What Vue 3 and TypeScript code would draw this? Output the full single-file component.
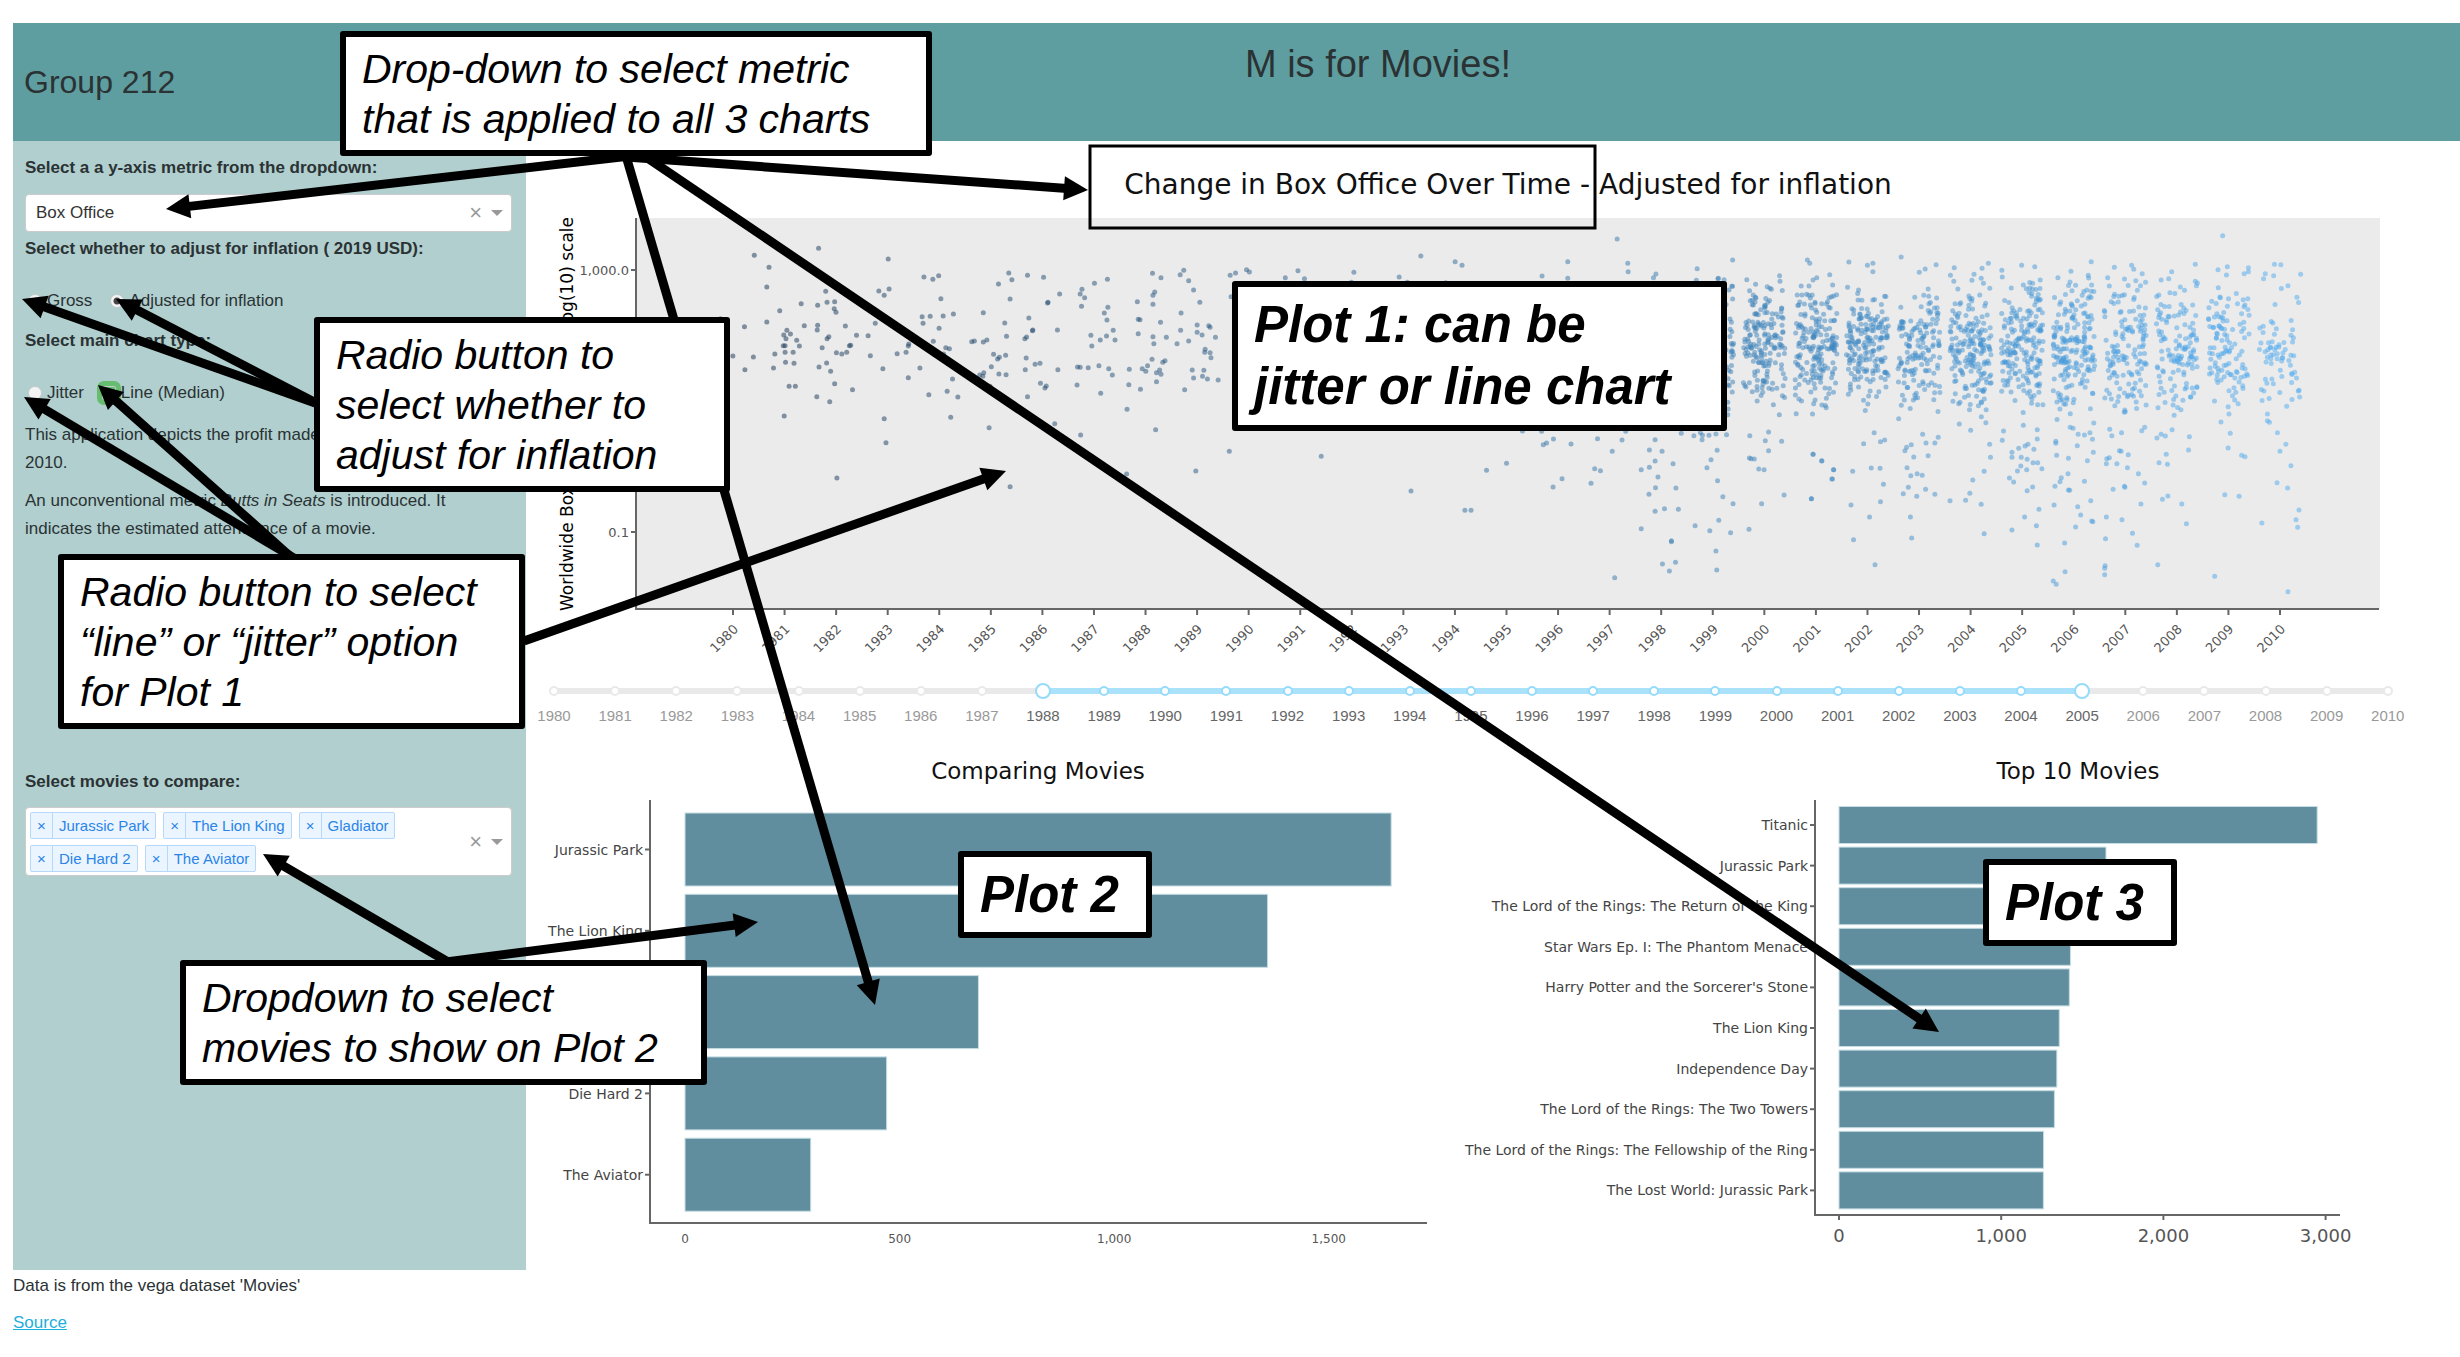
<script setup lang="ts">
import { ref } from 'vue'

interface Point { x: number; y: number; fill: string }
interface Bar { name: string; value: number }
interface Patch { x: number; y: number; kx: number; pts: number[] }
interface Note { id: string; left: number; top: number; width: number; height: number; strong?: boolean; lines: string[] }

const metrics = ['Box Office', 'Butts in Seats', 'Profit Ratio']
const metric = ref('Box Office')
const adjust = ref('adjusted')
const chartType = ref('line')
const movies = ref(['Jurassic Park', 'The Lion King', 'Gladiator', 'Die Hard 2', 'The Aviator'])
const from = ref(1988)
const to = ref(2005)
const years = Array.from({ length: 31 }, (_, i) => 1980 + i)

const yearX = (y: number) => 733 + ((y - 1980) * 1547) / 30
const pct = (y: number) => ((y - 1980) / 30) * 100
const removeMovie = (name: string) => { movies.value = movies.value.filter((m) => m !== name) }

// Colour ramp from dark navy (1980) to bright blue (2010)
function shade(x: number): string {
  const t = Math.min(1, Math.max(0, (x - 733) / 1547))
  const mix = (a: number, b: number) => Math.round(a + (b - a) * t)
  return `rgb(${mix(19, 80)},${mix(48, 172)},${mix(78, 242)})`
}

const patches: Patch[] = [
  { x: 540, y: 120, kx: 2.24, pts: [
    480,406, 513,442, 508,501, 624,385, 780,417, 640,514, 585,551, 622,556, 643,547, 660,545, 537,572, 659,566, 663,577, 508,606, 458,620,
    592,617, 622,616, 621,630, 684,618, 553,631, 546,645, 561,642, 551,656, 575,661, 545,677, 549,677, 581,678, 549,697, 567,697, 526,702,
    478,711, 432,708, 459,749, 523,744, 550,727, 569,730, 632,683, 643,656, 647,650, 693,677, 696,676, 664,698, 676,702, 687,697, 709,646,
    735,647, 740,707, 642,729, 625,741, 651,754, 558,799, 572,799, 620,830, 649,845, 660,791, 700,809, 547,888, 768,746, 751,610, 771,526,
    759,513, 782,507, 800,701, 820,697, 825,678, 826,672, 825,773, 771,896, 775,968, 665,1074, 860,471, 880,478, 893,467, 898,536, 856,590,
    874,589, 858,610, 903,588, 926,582, 894,625, 881,664, 909,683, 917,686, 904,702, 851,744, 924,777, 912,814, 871,824, 936,831, 920,892,
    1006,923, 993,578, 967,665, 973,663, 993,666, 1001,660, 1016,703, 1025,717, 1029,712, 1043,706, 1011,740, 994,758, 985,765, 992,769,
    1028,762, 1044,764, 1008,799, 1050,459, 1057,479, 1027,492, 1092,466, 1128,472, 1053,537, 1041,609, 1045,649, 1095,594, 1103,632,
    1104,630, 1138,547, 1137,549, 1164,522, 1086,656, 1090,651, 1089,714, 1087,749, 1109,733, 1120,730, 1159,630, 1160,749, 1121,790,
    1131,804, 1134,798, 1092,830, 1153,911, 1211,945, 1053,1100, 1203,795, 1204,741, 1210,742, 1228,743, 1252,737, 1256,820, 1242,490,
    1271,478, 1214,508, 1210,522, 1220,533, 1213,559, 1272,562, 1264,579, 1270,600, 1284,631, 1234,646, 1236,678, 1255,660, 1269,648,
    1288,660, 1274,746, 1282,765, 1320,748, 1319,794, 1345,808, 1315,868, 1314,1062, 1379,929, 1338,545, 1340,598, 1344,599, 1340,641,
    1372,460, 1391,473, 1377,516, 1373,526, 1373,553, 1390,607, 1373,650, 1375,671, 1403,652, 1371,718, 1395,727, 1400,722, 1361,737,
    1349,746, 1357,754, 1388,750, 1381,758, 1391,763, 1381,785, 1442,451, 1434,464, 1453,482, 1464,510, 1478,547, 1436,579, 1435,631,
    1427,671, 1453,663, 1472,615, 1472,637, 1483,645, 1498,617, 1501,622, 1513,652, 1490,688, 1489,697, 1501,698, 1503,713, 1461,750,
    1464,774, 1487,751, 1484,769, 1495,777, 1519,780, 1444,809, 1469,1053, 1544,994, 1546,466, 1558,459, 1548,530, 404,596
  ] },
  { x: 1200, y: 120, kx: 2.45, pts: [
    114,449, 121,456, 209,473, 240,452, 256,476, 377,457, 488,471, 541,408, 625,425, 642,436, 371,487, 508,487, 602,488, 838,468, 901,425,
    901,475, 1022,357, 1048,430, 1049,455, 1117,462, 1111,473, 1218,446, 1305,420, 1270,475, 1284,479, 1216,481, 1303,499, 1305,537,
    1302,607, 1303,635, 1301,697, 1303,712, 1296,751, 1294,776, 1305,786, 1304,816, 1293,847, 1294,867, 1293,884, 1296,510, 1299,628,
    297,1009, 517,1113, 649,1171, 664,1171, 702,1051, 751,1030, 790,933, 837,934, 866,957, 849,969, 841,974, 909,972, 974,956, 865,1101,
    887,1076, 967,1046, 981,1052, 958,1090, 1010,994, 1034,960, 1043,934, 1115,959, 1101,990, 1132,994, 1115,1023, 1159,1031, 1101,1042,
    1081,1049, 1122,1071, 1116,1103, 1166,1104, 1100,1123, 1138,1166, 1172,1168, 1115,1174, 1081,1226, 1155,1262, 1155,1265, 1165,1327,
    1133,1332, 1150,1353, 1016,1373, 1179,940, 1210,947, 1226,938, 1231,946, 1247,946, 1264,942, 1290,944, 1230,959, 1267,991, 1252,1019,
    1242,1043, 1268,1082, 1281,1130, 1306,1151, 1271,1201, 1213,1217, 1249,1232, 1300,1238, 1264,1293, 1266,1350, 1345,1228, 1376,1151,
    1431,1125, 1498,1136, 1369,1047, 1382,1049, 1346,1014, 1350,1016, 1358,1017, 1393,992, 1385,962, 1425,964, 1347,947, 1393,936,
    1502,1003, 1523,1022, 1552,1049, 1548,1077, 1488,420, 1494,430, 1420,467, 1421,484, 1511,473, 1502,480
  ] },
  { x: 1800, y: 120, kx: 2.373, pts: [
    116,426, 160,436, 173,430, 173,455, 240,411, 283,457, 297,447, 323,434, 366,443, 357,466, 365,484, 447,430, 432,445, 413,463, 408,481,
    430,475, 479,451, 480,471, 526,436, 557,440, 570,480, 552,490, 612,473, 643,454, 691,425, 684,466, 685,474, 692,495, 654,496, 746,442,
    787,436, 792,448, 812,461, 730,473, 770,477, 734,498, 820,487, 882,455, 857,480, 875,476, 938,433, 938,484, 943,489, 1003,347,
    992,449, 1014,440, 1012,465, 1064,443, 1054,461, 1064,455, 1126,433, 1141,434, 1104,461, 1100,476, 1124,467, 1188,463, 1158,497,
    151,971, 176,938, 191,965, 201,960, 125,1054, 169,1044, 190,1045, 198,1093, 191,1145, 121,1155, 165,1191, 127,1259, 178,1334,
    291,943, 328,952, 299,969, 320,969, 264,974, 253,982, 249,992, 270,1011, 304,1007, 254,1043, 263,1067, 278,1061, 290,1066, 257,1102,
    298,1108, 245,1121, 277,1129, 320,1123, 262,1191, 265,1254, 356,1142, 393,1141, 403,1120, 410,1080, 437,1054, 430,1153, 437,1241,
    452,1012, 450,973, 405,931, 441,908, 378,912, 483,933, 480,961, 563,929, 563,957, 530,916, 541,973, 534,978, 519,985, 555,988,
    503,997, 503,1012, 525,1012, 539,1018, 553,1028, 564,1028, 524,1038, 516,1053, 538,1049, 574,1046, 497,1074, 507,1086, 552,1101,
    539,1112, 567,1168, 533,1191, 561,1217, 503,1230, 563,1275, 641,922, 648,925, 660,943, 675,945, 688,938, 697,909, 694,958, 658,977,
    607,964, 607,970, 609,1006, 637,1015, 696,997, 682,1022, 636,1061, 620,1073, 617,1085, 605,1099, 637,1110, 640,1111, 675,1084,
    690,1142, 603,1155, 659,1160, 666,1185, 692,1203, 695,1205, 654,1221, 628,1269, 629,1355, 601,1383, 608,1393, 735,928, 740,947,
    763,938, 811,932, 818,922, 758,992, 762,994, 779,1004, 728,1016, 734,1013, 727,1031, 752,1031, 777,1043, 803,1061, 818,1089,
    743,1108, 770,1099, 771,1102, 809,1152, 727,1191, 764,1199, 789,1240, 725,1256, 800,1276, 724,1337, 723,1345, 723,1364, 847,954,
    857,943, 867,948, 883,929, 924,950, 922,990, 869,1003, 852,1028, 872,1033, 873,1128, 860,1138, 906,1152, 917,1211, 849,1334,
    1018,882, 999,906, 1021,940, 1016,984, 1048,1006, 1056,1010, 1008,1124, 1042,1129, 984,1369, 1109,902, 1114,907, 1133,938,
    1153,973, 1139,994, 1165,1037, 1132,1088, 1157,1104, 1184,1170, 1177,1199, 1181,1222, 1096,1209, 1158,1415, 31,1003, 52,1023,
    80,1049, 77,1077, 27,1136
  ] },
]

// Seeded jitter for the crowded years
let seed = 20190
const rand = () => {
  seed = (seed * 16807) % 2147483647
  return seed / 2147483647
}
const crowd: Record<number, number> = {
  1999: 70, 2000: 170, 2001: 185, 2002: 180, 2003: 145, 2004: 180, 2005: 185, 2006: 180, 2007: 135, 2008: 125, 2009: 110, 2010: 68,
}
const points: Point[] = []
for (const p of patches) {
  for (let i = 0; i < p.pts.length; i += 2) {
    const x = p.x + p.pts[i] / p.kx
    points.push({ x, y: p.y + p.pts[i + 1] / 3, fill: shade(x) })
  }
}
for (const [year, n] of Object.entries(crowd)) {
  for (let i = 0; i < n; i++) {
    const x = yearX(Number(year)) + (rand() - 0.5) * 42
    const y = 274 + ((rand() + rand()) / 2) * 146
    points.push({ x, y, fill: shade(x) })
  }
}

const compared: Bar[] = [
  { name: 'Jurassic Park', value: 1646 },
  { name: 'The Lion King', value: 1358 },
  { name: 'Gladiator', value: 684 },
  { name: 'Die Hard 2', value: 470 },
  { name: 'The Aviator', value: 293 },
]
const topTen: Bar[] = [
  { name: 'Titanic', value: 2948 },
  { name: 'Jurassic Park', value: 1646 },
  { name: 'The Lord of the Rings: The Return of the King', value: 1530 },
  { name: 'Star Wars Ep. I: The Phantom Menace', value: 1427 },
  { name: "Harry Potter and the Sorcerer's Stone", value: 1420 },
  { name: 'The Lion King', value: 1358 },
  { name: 'Independence Day', value: 1343 },
  { name: 'The Lord of the Rings: The Two Towers', value: 1328 },
  { name: 'The Lord of the Rings: The Fellowship of the Ring', value: 1261 },
  { name: 'The Lost World: Jurassic Park', value: 1260 },
]

const notes: Note[] = [
  { id: 'metric', left: 340, top: 31, width: 592, height: 125, lines: ['Drop-down to select metric', 'that is applied to all 3 charts'] },
  { id: 'inflation', left: 314, top: 317, width: 416, height: 175, lines: ['Radio button to', 'select whether to', 'adjust for inflation'] },
  { id: 'type', left: 58, top: 554, width: 467, height: 175, lines: ['Radio button to select', '“line” or “jitter” option', 'for Plot 1'] },
  { id: 'movies', left: 180, top: 960, width: 527, height: 125, lines: ['Dropdown to select', 'movies to show on Plot 2'] },
  { id: 'p1', left: 1232, top: 281, width: 495, height: 150, strong: true, lines: ['Plot 1: can be', 'jitter or line chart'] },
  { id: 'p2', left: 958, top: 851, width: 194, height: 87, strong: true, lines: ['Plot 2'] },
  { id: 'p3', left: 1983, top: 859, width: 194, height: 87, strong: true, lines: ['Plot 3'] },
]

// Arrow lines: x1, y1, x2, y2 with the tip at x2,y2
const lines = [
  [630, 156, 166, 209], [626, 157, 1088, 190], [626, 156, 875, 1005], [640, 153, 1939, 1032], [524, 641, 1006, 471],
  [318, 404, 22, 299], [318, 404, 116, 299], [294, 558, 24, 397], [292, 558, 98, 385], [448, 962, 263, 854], [446, 962, 758, 922],
]
const arrows = lines.map(([x1, y1, x2, y2]) => {
  const d = Math.hypot(x2 - x1, y2 - y1)
  const ux = (x2 - x1) / d
  const uy = (y2 - y1) / d
  const bx = x2 - ux * 24
  const by = y2 - uy * 24
  return {
    x1, y1, x2: bx + ux * 3, y2: by + uy * 3,
    head: `${x2},${y2} ${bx - uy * 12},${by + ux * 12} ${bx + uy * 12},${by - ux * 12}`,
  }
})
</script>

<template>
  <div class="page">
    <header class="banner">
      <h2>Group 212</h2>
      <h1>M is for Movies!</h1>
    </header>

    <div class="body">
      <aside class="sidebar">
        <label class="heading" for="metric">Select a a y-axis metric from the dropdown:</label>
        <div class="picker">
          <select id="metric" v-model="metric">
            <option v-for="m in metrics" :key="m">{{ m }}</option>
          </select>
          <button type="button" class="clear" aria-label="Clear metric">×</button>
          <svg class="caret" viewBox="0 0 12 6" aria-hidden="true"><path d="M0 0H12L6 6Z" /></svg>
        </div>

        <fieldset>
          <legend class="heading">Select whether to adjust for inflation ( 2019 USD):</legend>
          <label><input v-model="adjust" type="radio" name="adjust" value="gross">Gross</label>
          <label><input v-model="adjust" type="radio" name="adjust" value="adjusted">Adjusted for inflation</label>
        </fieldset>
        <fieldset>
          <legend class="heading">Select main chart type:</legend>
          <label><input v-model="chartType" type="radio" name="type" value="jitter">Jitter</label>
          <label><input v-model="chartType" class="focused" type="radio" name="type" value="line">Line (Median)</label>
        </fieldset>

        <p>This application depicts the profit made by movies from 1980 to 2010.</p>
        <p>An unconventional metric <em>Butts in Seats</em> is introduced. It indicates the estimated attendance of a movie.</p>

        <h3 class="heading compare">Select movies to compare:</h3>
        <div class="picker multi">
          <ul class="tags">
            <li v-for="m in movies" :key="m">
              <button type="button" :aria-label="'Remove ' + m" @click="removeMovie(m)">×</button>
              <span>{{ m }}</span>
            </li>
          </ul>
          <button type="button" class="clear" aria-label="Clear movies" @click="movies = []">×</button>
          <svg class="caret" viewBox="0 0 12 6" aria-hidden="true"><path d="M0 0H12L6 6Z" /></svg>
        </div>
      </aside>

      <main class="content">
        <svg class="chart" viewBox="526 141 1934 529" role="img" aria-label="Change in Box Office Over Time">
          <text x="1508" y="194" class="t1" text-anchor="middle">Change in Box Office Over Time - Adjusted for inflation</text>
          <rect x="636" y="218" width="1744" height="391" fill="#ebebeb" />
          <g fill-opacity="0.5">
            <circle v-for="(p, i) in points" :key="i" :cx="p.x" :cy="p.y" r="2.5" :fill="p.fill" />
          </g>
          <path class="axis" d="M636 218V609H2379M631 270H636M631 532H636" />
          <text x="629" y="275" class="tick" text-anchor="end">1,000.0</text>
          <text x="629" y="537" class="tick" text-anchor="end">0.1</text>
          <text class="ytitle" transform="translate(573 414) rotate(-90)" text-anchor="middle">Worldwide Box Office (mil USD) - log(10) scale</text>
          <g v-for="y in years" :key="y">
            <path class="axis" :d="`M${yearX(y)} 609v6`" />
            <text class="tick" text-anchor="end" :transform="`translate(${yearX(y) + 6} 630) rotate(-45)`">{{ y }}</text>
          </g>
        </svg>

        <section class="slider" aria-label="Years">
          <div class="rail">
            <div class="range" :style="{ left: pct(from) + '%', width: pct(to) - pct(from) + '%' }"></div>
            <div class="dots"><i v-for="y in years" :key="y" :class="{ on: y >= from && y <= to }"></i></div>
            <input v-model.number="from" type="range" min="1980" max="2010" aria-label="First year">
            <input v-model.number="to" type="range" min="1980" max="2010" aria-label="Last year">
          </div>
          <div class="marks"><span v-for="y in years" :key="y" :class="{ on: y >= from && y <= to }">{{ y }}</span></div>
        </section>

        <div class="pair">
          <svg class="chart" viewBox="526 740 914 530" role="img" aria-label="Comparing Movies">
            <text x="1038" y="779" class="t2" text-anchor="middle">Comparing Movies</text>
            <path class="axis" d="M650 800V1223H1427" />
            <g v-for="(b, i) in compared" :key="b.name">
              <rect class="bar" x="685" :y="813 + i * 81.3" :width="b.value * 0.429" height="73" />
              <path class="axis" :d="`M645 ${849.5 + i * 81.3}h5`" />
              <text class="tick name" x="643" :y="855 + i * 81.3" text-anchor="end">{{ b.name }}</text>
            </g>
            <text v-for="(v, i) in ['0', '500', '1,000', '1,500']" :key="v" class="tick small" :x="685 + i * 214.6" y="1243" text-anchor="middle">{{ v }}</text>
          </svg>

          <svg class="chart" viewBox="1440 740 1020 530" role="img" aria-label="Top 10 Movies">
            <text x="2078" y="779" class="t2" text-anchor="middle">Top 10 Movies</text>
            <path class="axis" d="M1815 800V1215H2340" />
            <g v-for="(b, i) in topTen" :key="b.name">
              <rect class="bar" x="1839" :y="806.5 + i * 40.6" :width="b.value * 0.1622" height="37" />
              <path class="axis" :d="`M1810 ${825 + i * 40.6}h5`" />
              <text class="tick name" x="1808" :y="830 + i * 40.6" text-anchor="end">{{ b.name }}</text>
            </g>
            <g v-for="(v, i) in ['0', '1,000', '2,000', '3,000']" :key="v">
              <path class="axis" :d="`M${1839 + i * 162.2} 1215v5`" />
              <text class="tick large" :x="1839 + i * 162.2" y="1242" text-anchor="middle">{{ v }}</text>
            </g>
          </svg>
        </div>
      </main>
    </div>

    <footer>
      <p>Data is from the vega dataset 'Movies'</p>
      <a href="#source">Source</a>
    </footer>

    <svg class="arrows" viewBox="0 0 2460 1357" aria-hidden="true">
      <g v-for="(a, i) in arrows" :key="i">
        <line :x1="a.x1" :y1="a.y1" :x2="a.x2" :y2="a.y2" stroke="#000" stroke-width="9" />
        <polygon :points="a.head" />
      </g>
      <rect x="1090" y="146" width="505" height="82" fill="none" stroke="#000" stroke-width="3" />
    </svg>
    <div
      v-for="n in notes" :key="n.id" class="note" :class="{ strong: n.strong }"
      :style="{ left: n.left + 'px', top: n.top + 'px', width: n.width + 'px', height: n.height + 'px' }"
    >
      <div v-for="l in n.lines" :key="l">{{ l }}</div>
    </div>
  </div>
</template>

<style>
body { margin: 0; background: #fff; }
</style>

<style scoped>
* { box-sizing: border-box; }
.page {
  position: relative;
  padding: 23px 0 20px 13px;
  overflow: hidden;
  font: 17px/28px "Liberation Sans", Arial, sans-serif;
  color: #2b3234;
}
h1, h2, h3, p, ul, fieldset, legend { margin: 0; padding: 0; border: 0; }
.banner {
  display: grid;
  grid-template-columns: 513px 1fr;
  align-items: center;
  height: 118px;
  background: #5f9ea0;
}
.banner h1, .banner h2 { font-weight: 400; line-height: 44px; }
.banner h2 { font-size: 32px; padding-left: 11px; }
.banner h1 { font-size: 38px; padding: 0 230px 36px 0; text-align: center; }
.body { display: grid; grid-template-columns: 513px minmax(0, 1fr); }
.sidebar { padding: 13px 12px 12px; background: #b0cfce; }
.heading { display: block; font-size: 17px; font-weight: 700; line-height: 28px; }
.picker {
  display: flex;
  align-items: center;
  margin: 12px 2px 3px 0;
  height: 38px;
  padding-right: 8px;
  background: #fff;
  border: 1px solid #ccc;
  border-radius: 4px;
}
.picker select {
  flex: 1;
  appearance: none;
  padding: 0 10px;
  border: 0;
  background: none;
  font: inherit;
  color: #333;
}
.clear {
  padding: 0;
  margin-right: 9px;
  border: 0;
  background: none;
  font: 22px/24px "Liberation Sans", Arial, sans-serif;
  color: #999;
}
.caret { width: 12px; height: 6px; fill: #999; }
fieldset { display: flex; gap: 18px; padding-left: 3px; margin-bottom: 12px; }
legend { margin: 0 0 24px -3px; }
fieldset label { display: flex; align-items: center; }
fieldset input {
  width: 14px;
  height: 14px;
  margin: 0 5px 0 0;
  appearance: none;
  border: 1px solid #c4cccc;
  border-radius: 50%;
  background: #f4f4f4;
}
fieldset input:checked { background: radial-gradient(circle, #444 0 3px, #f4f4f4 4px); }
fieldset .focused { outline: 5px solid #66bd70; border-radius: 2px; background: #66bd70; }
fieldset .focused:checked { background: #66bd70; }
.sidebar p { margin-top: 10px; }
fieldset + p { padding-top: 2px; }
.compare { margin-top: 225px; }
.picker.multi { height: 69px; margin-top: 11px; }
.tags { flex: 1; display: flex; flex-wrap: wrap; gap: 6px 7px; padding-left: 4px; list-style: none; }
.tags li {
  display: flex;
  height: 27px;
  border: 1px solid #b5d8fb;
  border-radius: 2px;
  background: #ebf5ff;
  color: #2a84e8;
  font-size: 15px;
  line-height: 25px;
}
.tags button {
  width: 22px;
  padding: 0;
  border: 0;
  border-right: 1px solid #b5d8fb;
  background: none;
  font: inherit;
  color: inherit;
}
.tags span { padding: 0 6px; }
.chart { display: block; width: 100%; height: auto; font-family: "DejaVu Sans", Verdana, sans-serif; }
.t1 { font-size: 28px; fill: #111; }
.t2 { font-size: 23px; fill: #111; }
.ytitle { font-size: 17px; fill: #000; }
.tick { font-size: 13px; fill: #555; }
.name { font-size: 14px; fill: #444; }
.small { font-size: 12px; }
.large { font-size: 18px; }
.axis { fill: none; stroke: #666; stroke-width: 2; }
.bar { fill: #608e9e; stroke: #c5dde3; stroke-width: 1; }
.slider { height: 70px; padding: 18px 72px 0 28px; }
.rail { position: relative; height: 6px; border-radius: 3px; background: #e9e9e9; }
.range { position: absolute; height: 6px; background: #abe2fb; }
.dots, .marks { position: relative; display: flex; justify-content: space-between; }
.dots i {
  width: 10px;
  height: 10px;
  margin: -2px -5px 0;
  border: 2px solid #e9e9e9;
  border-radius: 50%;
  background: #fff;
}
.dots i.on { border-color: #96dbfa; }
.rail input {
  position: absolute;
  top: -5px;
  left: -8px;
  width: calc(100% + 16px);
  height: 16px;
  margin: 0;
  appearance: none;
  background: none;
  pointer-events: none;
}
.rail input::-webkit-slider-thumb {
  appearance: none;
  width: 16px;
  height: 16px;
  border: 2px solid #96dbfa;
  border-radius: 50%;
  background: #fff;
  pointer-events: auto;
}
.marks { padding-top: 8px; font-size: 15px; color: #999; }
.marks span { width: 0; display: flex; justify-content: center; }
.marks .on { color: #666; }
.pair { display: grid; grid-template-columns: 914fr 1020fr; }
footer p { padding: 2px 0 9px; }
footer a { display: inline-block; color: #1eaedb; }
.arrows { position: absolute; top: 0; left: 0; width: 100%; height: auto; }
.note {
  position: absolute;
  padding: 7px 16px;
  border: 6px solid #000;
  border-radius: 3px;
  background: #fff;
  color: #000;
  font-size: 41px;
  font-style: italic;
  line-height: 50px;
  white-space: nowrap;
}
.strong { font-size: 51px; font-weight: 700; line-height: 62px; }
</style>
